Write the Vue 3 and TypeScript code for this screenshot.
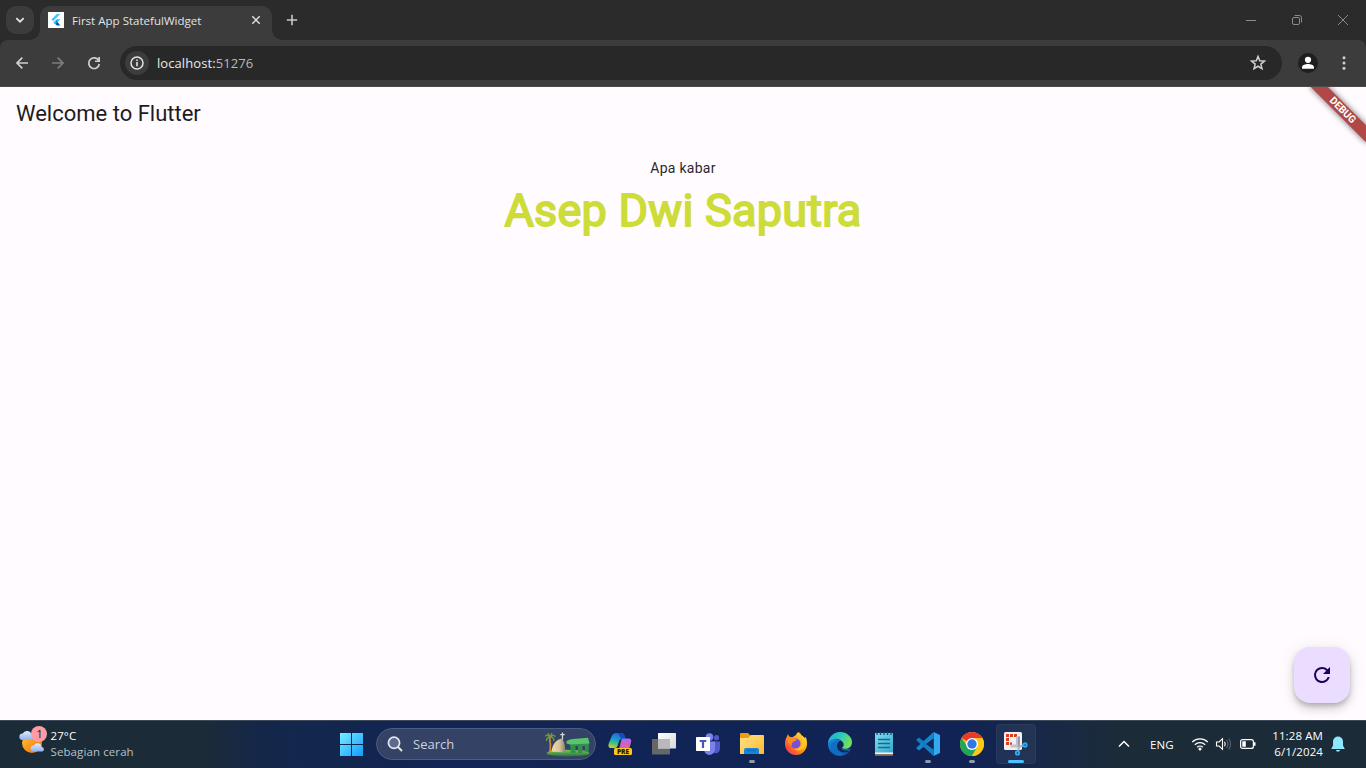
<script setup lang="ts">
import { ref } from 'vue'

const greeting = ref<string>('Apa kabar')
const name = ref<string>('Asep Dwi Saputra')
</script>

<template>
  <div class="screen">
    <header class="tabs">
      <button class="tab-search"><svg width="28" height="28" viewBox="0 0 28 28"><path d="M10.3 12.2 14 15.7l3.7-3.5" fill="none" stroke="#e3e3e3" stroke-width="1.8" /></svg></button>
      <div class="tab">
        <svg class="favicon" width="16" height="16" viewBox="0 0 16 16">
          <path d="M0 0h16v16H0z" fill="#fff" />
          <path d="M8.800 2h3.500L5.200 9.300 3.400 7.600z" fill="#44c5fb" />
          <path d="M8.800 7.300h3.500l-3.500 3.500-1.800-1.800z" fill="#29b6f6" />
          <path d="m7 10.800 1.800-1.700 3.500 4.500H8.800L6.500 11.300z" fill="#075a9e" />
          <path d="m5.400 10.500 1.800-1.700L9 10.500l-1.800 1.800z" fill="#29b6f6" />
        </svg>
        <span class="tab-title">First App StatefulWidget</span>
        <svg class="tab-close" width="16" height="16" viewBox="0 0 16 16"><path d="m4.300 4.300 7.400 7.400m0-7.400-7.400 7.400" stroke="#dedede" stroke-width="1.500" /></svg>
      </div>
      <svg class="new-tab" width="16" height="16" viewBox="0 0 16 16"><path d="M8 2.800v10.400M2.800 8h10.400" stroke="#c9c9c9" stroke-width="1.600" /></svg>
      <div class="window-controls">
        <svg width="46" height="40" viewBox="0 0 46 40"><path d="M18 20.500h10" stroke="#8b8b8b" /></svg>
        <svg width="46" height="40" viewBox="0 0 46 40" fill="none" stroke="#8b8b8b"><rect x="18.500" y="17.500" width="7" height="7" rx="1.500" /><path d="M20.500 15.500h5q2 0 2 2v5" /></svg>
        <svg width="46" height="40" viewBox="0 0 46 40"><path d="m18 15 10 10m0-10-10 10" stroke="#8b8b8b" /></svg>
      </div>
    </header>

    <nav class="toolbar">
      <svg width="20" height="20" viewBox="0 0 20 20" fill="none" stroke="#d0d0d0" stroke-width="1.700"><path d="M16 10H5m5.300-5.300L5 10l5.300 5.300" /></svg>
      <svg width="20" height="20" viewBox="0 0 20 20" fill="none" stroke="#7d7d7d" stroke-width="1.700"><path d="M4 10h11M9.700 4.700 15 10l-5.300 5.300" /></svg>
      <svg width="20" height="20" viewBox="0 0 20 20"><path d="M14.800 7.800A5.300 5.300 0 1 0 15.300 11" fill="none" stroke="#d0d0d0" stroke-width="1.700" /><path d="M16 4v5h-5V7.600h3.300V4z" fill="#d0d0d0" /></svg>
      <div class="omnibox">
        <span class="site-info"><svg width="24" height="24" viewBox="0 0 24 24"><circle cx="12" cy="12" r="6" fill="none" stroke="#e3e3e3" stroke-width="1.500" /><path d="M11.200 11h1.600v4.300h-1.600zm0-2.600h1.600V10h-1.600z" fill="#e3e3e3" /></svg></span>
        <span class="url">localhost:<span class="port">51276</span></span>
        <svg class="star" width="18" height="18" viewBox="0 0 18 18"><path d="m9 2.400 1.750 4.350 4.700.35-3.600 3 1.130 4.600L9 12.250 5.020 14.700l1.130-4.600-3.600-3 4.700-.35z" fill="none" stroke="#d0d0d0" stroke-width="1.500" /></svg>
      </div>
      <svg class="profile" width="20" height="20" viewBox="0 0 20 20"><circle cx="10" cy="10" r="10" fill="#1f1f1f" /><circle cx="10" cy="6.800" r="3.100" fill="#fff" /><path d="M4 15.800v-1.500c0-2.200 3.500-3.200 6-3.200s6 1 6 3.200v1.500z" fill="#fff" /></svg>
      <svg class="menu" width="20" height="20" viewBox="0 0 20 20" fill="#d0d0d0"><circle cx="10" cy="4.800" r="1.500" /><circle cx="10" cy="10" r="1.500" /><circle cx="10" cy="15.200" r="1.500" /></svg>
    </nav>

    <main class="page">
      <h1 class="app-title">Welcome to Flutter</h1>
      <section class="content">
        <p class="greeting">{{ greeting }}</p>
        <p class="name">{{ name }}</p>
      </section>
      <div class="banner">DEBUG</div>
      <button class="fab"><svg width="24" height="24" viewBox="0 0 24 24"><path d="M17.650 6.350A7.960 7.960 0 0 0 12 4a8 8 0 1 0 7.730 10h-2.080A6 6 0 1 1 12 6c1.660 0 3.140.69 4.220 1.780L13 11h7V4z" fill="#21005d" /></svg></button>
    </main>

    <footer class="taskbar">
      <div class="weather">
        <svg width="32" height="32" viewBox="0 0 32 32">
          <defs>
            <linearGradient id="sun" x1="0" y1="0" x2="1" y2="1"><stop stop-color="#ffc938" /><stop offset="1" stop-color="#ee6c08" /></linearGradient>
            <linearGradient id="cloud" x1="0" y1="0" x2="0" y2="1"><stop stop-color="#e2ecff" /><stop offset="1" stop-color="#92b1ea" /></linearGradient>
          </defs>
          <circle cx="14" cy="17" r="10" fill="url(#sun)" />
          <path d="M4.500 14a3.200 3.200 0 0 1 .2-6.400A4.700 4.700 0 0 1 13.600 9a2.600 2.600 0 0 1 .7 5z" fill="url(#cloud)" />
          <path d="M15.500 25.500a3 3 0 0 1 .3-6 4.200 4.200 0 0 1 7.900 1.400 2.400 2.400 0 0 1 .8 4.600z" fill="url(#cloud)" />
          <circle cx="21" cy="8" r="8" fill="#ff9ba4" />
          <text x="21.500" y="12.200" text-anchor="middle" font-size="11.500" fill="#1b1b1b">1</text>
        </svg>
        <div class="forecast"><span class="degrees">27°C</span><span class="sky">Sebagian cerah</span></div>
      </div>

      <div class="apps">
        <span class="app">
          <svg width="24" height="24" viewBox="0 0 24 24"><defs><linearGradient id="win" x1="0" y1="0" x2="1" y2="1"><stop stop-color="#75efff" /><stop offset="1" stop-color="#129bff" /></linearGradient></defs><path d="M0 1h11v11H0zM12 1h11v11H12zM0 13h11v11H0zM12 13h11v11H12z" fill="url(#win)" /></svg>
        </span>
        <div class="search">
          <svg width="18" height="18" viewBox="0 0 18 18"><circle cx="8" cy="7.800" r="5.600" fill="#5b6a8d" stroke="#e4e7ee" stroke-width="1.700" /><path d="m12 12 4 4" stroke="#e4e7ee" stroke-width="2" /></svg>
          <span class="search-label">Search</span>
          <svg class="highlight" width="46" height="26" viewBox="0 0 46 26">
            <defs>
              <linearGradient id="rock" x1="0" y1="0" x2="1" y2="0"><stop stop-color="#f0dda8" /><stop offset=".6" stop-color="#d8c19a" /><stop offset="1" stop-color="#84866e" /></linearGradient>
              <linearGradient id="grass" x1="0" y1="0" x2="0" y2="1"><stop stop-color="#7ccb5c" /><stop offset="1" stop-color="#267a3b" /></linearGradient>
            </defs>
            <path d="M2 21.500c4-3 8-3 12-3l25 1c6 1 7 3 3 4.500-8 1.500-26 1.500-34 .5-4-.5-8-1-6-3z" fill="url(#grass)" />
            <path d="M6.500 20.500C7.500 13 11 9 16.500 7.500c3 2 4 8 3.500 14z" fill="url(#rock)" />
            <path d="M17.500 1.500v7M15.300 3.700h4.400" stroke="#d6dadd" stroke-width="1.200" />
            <path d="M4.500 6c1 5 1.500 9 .5 16" fill="none" stroke="#c98a3c" stroke-width="1.700" />
            <path d="M5 6C2 3 1 4 .5 5.500M5 6c3-3 5-1.500 5 0M5 6C2 6 1.500 8 1.500 10M5 6c3 0 4 2 4 4M5 6l2-4M5 6 3 2" fill="none" stroke="#6f9c3d" stroke-width="1.300" />
            <path d="M25 12h19l-.5 9H40v-6h-2.500v7H33v-7h-2.500v7H26z" fill="#348f4b" />
            <path d="m21.500 10 4-1.800L43 6.700l1.500 5.800-19.500 1-3.500-1z" fill="#55c66c" />
          </svg>
        </div>
        <span class="app">
          <svg width="26" height="26" viewBox="0 0 26 26">
            <defs><linearGradient id="co1" x1=".4" y1="0" x2=".1" y2="1"><stop stop-color="#2463e8" /><stop offset=".45" stop-color="#16aac3" /><stop offset=".75" stop-color="#70c65b" /><stop offset="1" stop-color="#ded334" /></linearGradient><linearGradient id="co2" x1="0" y1="0" x2="0" y2="1"><stop stop-color="#a76af3" /><stop offset="1" stop-color="#f15c92" /></linearGradient></defs>
            <path d="M5 4.500Q6 2 8.500 2h6q2 0 3 3l1 3h-4q-2 0-2.500 2L10.500 15q-.5 2-2.500 2H4Q.8 17 1.600 13z" fill="url(#co1)" />
            <path d="M15.500 7.500h6q3.500 0 2.500 4l-2 7H12l2-8q.5-3 1.500-3z" fill="url(#co2)" />
            <path d="M11 2h4q2 0 3 3l1 2.500h-5z" fill="#174cb5" />
            <rect x="7" y="17" width="18" height="7" rx="1.500" fill="#ffc61a" />
            <text x="16" y="23" text-anchor="middle" font-size="6.500" font-weight="800" fill="#171717">PRE</text>
          </svg>
        </span>
        <span class="app">
          <svg width="26" height="26" viewBox="0 0 26 26"><defs><linearGradient id="tv" x1="0" y1="0" x2="1" y2="1"><stop stop-color="#fff" /><stop offset="1" stop-color="#d8d8d8" /></linearGradient></defs><rect x="1" y="8" width="18" height="15.500" rx=".5" fill="#656668" /><rect x="7" y="2" width="18" height="15.500" rx=".5" fill="url(#tv)" /><path d="M7 8h12v9.500H7z" fill="#b9b9ba" /></svg>
        </span>
        <span class="app">
          <svg width="26" height="26" viewBox="0 0 26 26"><circle cx="14.500" cy="6" r="3.800" fill="#7b83eb" /><circle cx="21.500" cy="6.700" r="2.600" fill="#5059c9" /><path d="M16 10.500h9v7a4.500 4.500 0 0 1-7 4z" fill="#5059c9" /><path d="M9 10.500h11v7c0 8-11 9-11 0z" fill="#7b83eb" /><rect x="1" y="6" width="14" height="14" rx=".7" fill="#fff" /><path d="M4.700 9h6.600v2H9.100v6H6.900v-6H4.700z" fill="#4b53bc" /></svg>
        </span>
        <span class="app running">
          <svg width="26" height="26" viewBox="0 0 26 26"><defs><linearGradient id="folder" x1="0" y1="0" x2="1" y2="1"><stop stop-color="#ffe389" /><stop offset="1" stop-color="#ffb82e" /></linearGradient></defs><path d="M1 3q0-1 1-1h7l3 3v5H1z" fill="#e9a010" /><path d="M1 7h8l3-3h12q1 0 1 1v18H1z" fill="url(#folder)" /><path d="M5 23v-4q0-2 2-2h11q2 0 2 2v4z" fill="#1686d9" /><path d="M8 19.500h9" stroke="#0c6dbb" stroke-width="1.500" /></svg>
        </span>
        <span class="app">
          <svg width="26" height="26" viewBox="0 0 26 26"><defs><linearGradient id="fx" x1="1" y1="0" x2="0" y2="1"><stop stop-color="#fff24a" /><stop offset=".5" stop-color="#ff980e" /><stop offset="1" stop-color="#ff1a61" /></linearGradient></defs><path d="M5 3l1.500 3 2.500.5L13 4l1-2 2-1c1 3 5 4 5.500 6l1-1C24 8 24 11 24 13A11 11 0 0 1 2 13c0-4 1-6 2-7.500z" fill="url(#fx)" /><circle cx="12.500" cy="12.500" r="5" fill="#7650d8" /><path d="M4 6c2-1 5 0 7 2 2 0 3 0 3 1l-3 1.500c-2 1-3 2-2 4.500C6 14 4 10 4 6z" fill="#ff8b20" /><path d="M17 1.500c-1 4 3 5 2.500 11-.5 4-5 6-8.500 5 4 4 11 1 11-5 0-5-4-7-5-11z" fill="#ffc629" /></svg>
        </span>
        <span class="app">
          <svg width="26" height="26" viewBox="0 0 26 26"><defs><linearGradient id="ed" x1="0" y1="0" x2="1" y2=".4"><stop stop-color="#1ba9e2" /><stop offset=".5" stop-color="#2bc6c4" /><stop offset="1" stop-color="#6fe05b" /></linearGradient><linearGradient id="ed2" x1="0" y1="0" x2="1" y2="1"><stop stop-color="#168be0" /><stop offset="1" stop-color="#114d9b" /></linearGradient></defs><path d="M1 13C1 6 7 7 13 9l1 8 10 1c-2 4-6 7-11 7A12 12 0 0 1 1 13z" fill="url(#ed2)" /><path d="M1 12C2 5 7 1 13 1c7 0 12 5 12 10 0 7-7 8-10 5.500 2-1 2-3 1-5C13 7 5 6 1 12z" fill="url(#ed)" /><path d="M12.500 10c-3 2-4 8 1 10.500 3.500 1.500 7 1 9.500-1-4 1-10-.5-9-4 2-1 2-5-1.500-5.500z" fill="#122653" /><path d="M9 12c-1 6 3 11 9 11-7 4-14-1-14-7 0-4 5-7 10-6-3 0-4 0-5 2z" fill="#106dc1" /></svg>
        </span>
        <span class="app">
          <svg width="26" height="26" viewBox="0 0 26 26"><defs><linearGradient id="note" x1="0" y1="0" x2="1" y2="1"><stop stop-color="#83dbed" /><stop offset="1" stop-color="#31a8d1" /></linearGradient></defs><path d="M4 2h18v20H4z" fill="url(#note)" /><path d="M4 21.500h18v2H4z" fill="#f5f5f5" /><path d="M4 23.500h18v1.500H4z" fill="#a4551d" /><path d="M7 8.500h12M7 12.500h12M7 16.500h12" stroke="#116d8f" stroke-width="1.700" /><path d="M6 1v3m3.500-3v3M13 1v3m3.500-3v3M20 1v3" stroke="#17526f" stroke-width="1.300" /></svg>
        </span>
        <span class="app running">
          <svg width="26" height="26" viewBox="0 0 26 26"><path d="m18.500 1 6.500 3v18l-6.500 3z" fill="#31a8f0" /><path d="M18.500 1v7L4 19.500 1 17z" fill="#1684cf" /><path d="m1 9 3-2.500L18.500 18v7z" fill="#147cc3" /><path d="M18.500 7.500v11l-7.500-5.500z" fill="#112653" /></svg>
        </span>
        <span class="app running">
          <svg width="26" height="26" viewBox="0 0 26 26"><circle cx="13" cy="13" r="12" fill="#fdc719" /><path d="M13 13 2.600 7A12 12 0 0 1 23.400 7z" fill="#e8392e" /><path d="M2.600 7A12 12 0 0 0 13 25l5.500-9.500-10.200 0z" fill="#22a45a" /><path d="M13 7h10.400A12 12 0 0 1 13 25l5.400-9z" fill="#fdc719" /><circle cx="13" cy="13" r="6" fill="#fff" /><circle cx="13" cy="13" r="4.700" fill="#3078e8" /></svg>
        </span>
        <span class="app active">
          <svg width="26" height="26" viewBox="0 0 26 26">
            <rect x="1" y="1" width="18" height="18" rx="1.500" fill="#f1f1f3" />
            <path d="M3 3h3v3H3zM7 3h3v3H7zM11 3h3v3h-3zM3 7h3v3H3zM3 11h3v3H3zM7 11.500h2v2.500H7z" fill="#db3d21" />
            <path d="M14.500 5.500V15H7.500" fill="none" stroke="#c0c2c6" stroke-width="3" />
            <path d="M16 5.500v11" stroke="#85888d" stroke-width="1.500" />
            <path d="m14.500 16 6-1.500M16 15l-.8 5" stroke="#a8b4bf" stroke-width="2" />
            <circle cx="22" cy="14" r="1.700" fill="none" stroke="#2aabee" stroke-width="1.900" /><circle cx="14.500" cy="22" r="1.700" fill="none" stroke="#2aabee" stroke-width="1.900" />
          </svg>
        </span>
      </div>

      <div class="tray">
        <svg class="chevron" width="14" height="14" viewBox="0 0 14 14"><path d="m2 9.500 5-5 5 5" fill="none" stroke="#fff" stroke-width="1.500" /></svg>
        <span class="lang">ENG</span>
        <svg class="wifi" width="18" height="16" viewBox="0 0 18 16"><path d="M1.300 6a11 11 0 0 1 15.400 0M3.800 8.700a7.400 7.400 0 0 1 10.400 0M6.200 11.200a4 4 0 0 1 5.600 0" fill="none" stroke="#fff" stroke-width="1.200" /><circle cx="9" cy="13" r="1.500" fill="#fff" /></svg>
        <svg class="sound" width="18" height="16" viewBox="0 0 18 16" fill="none" stroke="#fff" stroke-width="1.100"><path d="M1.500 6h2.600L7.500 2.700v10.600L4.100 10H1.500z" /><path d="M9.500 5.700q1.500 2.300 0 4.600" /><path d="M11.700 4q2.500 4 0 8M13.900 2.500q3.300 5.500 0 11" stroke="#566472" /></svg>
        <svg class="battery" width="18" height="12" viewBox="0 0 18 12"><rect x="1.600" y="1.600" width="12.800" height="8.800" rx="2" fill="none" stroke="#fff" stroke-width="1.200" /><path d="M3.300 3.300h3.500v5.400H3.300zM15 4.300h1.500v3.400H15z" fill="#fff" /></svg>
        <div class="clock"><span>11:28 AM</span><span>6/1/2024</span></div>
        <svg class="bell" width="16" height="18" viewBox="0 0 16 18"><path d="M8 1.500A5 5 0 0 0 3 6.500v4L1.200 14h13.600L13 10.500v-4a5 5 0 0 0-5-5zM5.800 15a2.300 2.300 0 0 0 4.400 0z" fill="#8ce7ff" /></svg>
      </div>
    </footer>
  </div>
</template>

<style>
body { margin: 0; overflow: hidden; }
</style>

<style scoped>
* { box-sizing: border-box; }
svg { display: block; flex: none; }
button { border: 0; padding: 0; }
.screen { width: 1366px; height: 768px; display: flex; flex-direction: column; overflow: hidden; font-family: "Open Sans", "Noto Sans", sans-serif; background: #2b2b2b; }
.tabs { height: 40px; flex: none; display: flex; align-items: center; padding-left: 6px; }
.tab-search { width: 28px; height: 28px; border-radius: 10px; background: #3c3c3c; }
.tab { position: relative; align-self: flex-end; width: 232px; height: 34px; margin-left: 6px; padding: 0 8px 6px; display: flex; align-items: center; background: #3c3c3c; border-radius: 10px 10px 0 0; }
.tab::before, .tab::after { content: ""; position: absolute; bottom: 0; width: 10px; height: 10px; }
.tab::before { right: 100%; background: radial-gradient(circle at 0 0, transparent 9.5px, #3c3c3c 10px); }
.tab::after { left: 100%; background: radial-gradient(circle at 100% 0, transparent 9.5px, #3c3c3c 10px); }
.tab-title { margin-left: 8px; font-size: 11.5px; letter-spacing: 0.02px; color: #e3e3e3; white-space: nowrap; }
.tab-close { margin-left: auto; }
.new-tab { margin-left: 12px; }
.window-controls { margin-left: auto; display: flex; }
.toolbar { height: 47px; flex: none; display: flex; align-items: center; gap: 16px; padding: 0 12px; background: #3c3c3c; border-radius: 8px 8px 0 0; border-bottom: 1px solid #4a4a4a; }
.omnibox { flex: none; width: 1162px; height: 34px; border-radius: 17px; background: #282828; display: flex; align-items: center; padding: 0 15px 0 5px; }
.site-info { width: 24px; height: 24px; border-radius: 50%; background: #3c3c3c; }
.url { margin-left: 8px; font-size: 13px; letter-spacing: 0.08px; color: #e8e8e8; }
.port { color: #b9b9b9; }
.star { margin-left: auto; }
.page { position: relative; flex: 1; overflow: hidden; background: #fffbff; font-family: Roboto, sans-serif; }
.app-title { margin: 0; padding: 0 16px; height: 56px; line-height: 54px; font-size: 22px; font-weight: 400; color: #1d1b1e; }
.content { display: flex; flex-direction: column; align-items: center; padding-top: 15px; }
.greeting { margin: 0; font-size: 14px; line-height: 20px; letter-spacing: 0.25px; color: #2b292c; }
.name { margin: 0; font-size: 45px; line-height: 66px; font-weight: 400; letter-spacing: 0.25px; -webkit-text-stroke: 1.8px #cddc39; color: #cddc39; }
.banner { position: absolute; top: 27px; left: calc(100% - 40px); width: 80px; height: 12px; transform-origin: 40px -27px; transform: rotate(45deg); background: #b04848; box-shadow: 0 0 6px rgba(0, 0, 0, .6); color: #fff; font-size: 10.2px; line-height: 12px; font-weight: 700; text-align: center; }
.fab { position: absolute; right: 16px; bottom: 17px; width: 56px; height: 56px; border-radius: 16px; background: #eaddff; display: grid; place-items: center; box-shadow: 0 3px 5px -1px rgba(0, 0, 0, .2), 0 6px 10px rgba(0, 0, 0, .14), 0 1px 18px rgba(0, 0, 0, .08); }
.taskbar { height: 48px; flex: none; display: grid; grid-template-columns: 331px 705px 330px; grid-template-rows: 47px; border-top: 1px solid #3c4a5b; background: linear-gradient(90deg, #1c2b38 0, #1c2b38 205px, #14274a 260px, #122553 420px, #112456 650px, #102354 960px, #182947 1050px, #1c2b38 1120px); color: #fff; }
.weather { display: flex; align-items: flex-start; padding: 5px 0 0 17.5px; }
.forecast { display: flex; flex-direction: column; margin-left: 1px; padding-top: 2px; font-size: 11.5px; line-height: 16px; letter-spacing: 0.1px; }
.sky { color: #b9c0c7; }
.apps { display: flex; align-items: center; gap: 4px; padding: 0 0 1px 1px; }
.app { position: relative; width: 40px; height: 40px; flex: none; border-radius: 4px; display: grid; place-items: center; }
.active { background: rgba(255, 255, 255, .06); box-shadow: inset 0 0 0 1px rgba(255, 255, 255, .04); }
.running::after, .active::after { content: ""; position: absolute; bottom: 1px; left: 17px; width: 6px; height: 3px; border-radius: 2px; background: #9299aa; }
.active::after { left: 12px; width: 16px; background: #4cc2ff; }
.search { width: 220px; height: 32px; flex: none; border-radius: 16px; border: 1px solid #4c5b80; background: #344265; display: flex; align-items: center; padding: 0 4px 0 9px; }
.search-label { margin-left: 9px; font-size: 13px; color: #cdd2de; }
.highlight { margin-left: auto; }
.tray { display: flex; align-items: center; font-size: 11.5px; letter-spacing: 0.1px; padding: 0 0 1px 81px; }
.lang { margin-left: 19px; width: 25px; }
.wifi { margin-left: 16px; }
.sound { margin-left: 6px; }
.battery { margin-left: 6px; }
.clock { width: 66px; display: flex; flex-direction: column; text-align: right; line-height: 16px; }
.bell { margin-left: 7px; }
</style>
